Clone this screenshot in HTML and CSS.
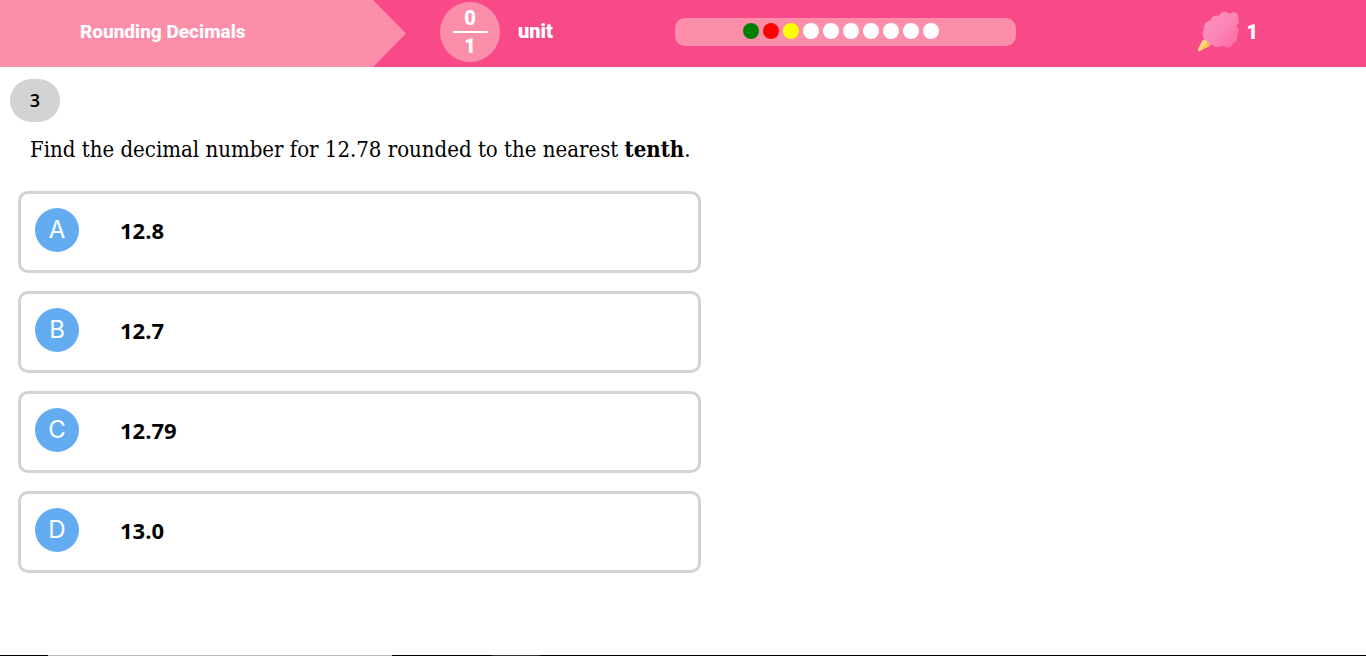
FILE: index.html
```html
<!DOCTYPE html>
<html lang="en">
<head>
<meta charset="utf-8">
<meta name="viewport" content="width=device-width, initial-scale=1">
<title>Rounding Decimals</title>
<link rel="stylesheet" href="styles.css">
</head>
<body>
<header class="topbar">
  <h1 class="topic">Rounding Decimals</h1>
  <div class="units">
    <div class="fraction"><span class="numerator">0</span><span class="denominator">1</span></div>
    <span class="unit-label">unit</span>
  </div>
  <ol class="progress" aria-label="Question progress">
    <li class="dot dot-right"></li><li class="dot dot-wrong"></li><li class="dot dot-current"></li><li class="dot"></li><li class="dot"></li><li class="dot"></li><li class="dot"></li><li class="dot"></li><li class="dot"></li><li class="dot"></li>
  </ol>
  <div class="reward">
    <svg class="candy" viewBox="0 0 42 42" aria-hidden="true">
      <defs><linearGradient id="floss" x1="0" y1="0" x2="1" y2="1"><stop offset="0" stop-color="#ff91c2"/><stop offset=".5" stop-color="#fa87b5"/><stop offset="1" stop-color="#ff64a4"/></linearGradient></defs>
      <path fill="url(#floss)" d="M11 34C7 33 5 30 6 27C3 24 5 20 6 18C5 12 10 10 13 9C14 4 19 4 21 5C22 1 28-1 31 3C36-1 42 3 40 8C42 11 40 14 38 15C42 18 41 23 39 24C40 29 38 32 35 32C33 38 27 38 25 34C22 37 17 37 15 34Z"/>
      <path fill="#ffc34f" d="M5 29Q10 29 12 35L2 40Q0 41 0 38Z"/>
      <path fill="#ffda83" d="M5 29Q8 29 9 31L2 40Q0 41 0 38Z"/>
    </svg>
    <span>1</span>
  </div>
</header>
<main class="quiz">
  <span class="question-number">3</span>
  <h2 class="question">Find the decimal number for 12.78 rounded to the nearest <strong>tenth</strong>.</h2>
  <div class="answers">
    <button class="answer" type="button"><span class="letter">A</span><span class="value">12.8</span></button>
    <button class="answer" type="button"><span class="letter">B</span><span class="value">12.7</span></button>
    <button class="answer" type="button"><span class="letter">C</span><span class="value">12.79</span></button>
    <button class="answer" type="button"><span class="letter">D</span><span class="value">13.0</span></button>
  </div>
</main>
<footer class="bottom-edge"></footer>
</body>
</html>
```

FILE: styles.css
```css
* { box-sizing: border-box; }

body {
  margin: 0;
  min-height: 100vh;
  display: flex;
  flex-direction: column;
  background: #fff;
  color: #000;
  font-family: "Open Sans", sans-serif;
}

.topbar {
  display: grid;
  grid-template-columns: 406fr 269fr 341fr 350fr;
  align-items: center;
  background: #f84a89;
  color: #fff;
  font-family: Roboto, sans-serif;
  font-size: 20px;
  font-weight: 900;
}

.topic {
  margin: 0;
  padding: 0 80px 4px;
  height: 67px;
  line-height: 63px;
  background: #fd8eaa;
  clip-path: polygon(0 0, calc(100% - 33px) 0, 100% 50%, calc(100% - 33px) 100%, 0 100%);
  font-size: 19px;
  font-weight: 800;
  white-space: nowrap;
}

.units {
  display: flex;
  align-items: center;
  gap: 18px;
  padding: 0 0 4px 34px;
}

.unit-label {
  padding-bottom: 2px;
}

.fraction {
  width: 60px;
  height: 60px;
  display: flex;
  flex-direction: column;
  align-items: center;
  justify-content: center;
  border-radius: 50%;
  background: #fd8eaa;
  line-height: 26px;
}

.numerator {
  width: 35px;
  border-bottom: 2px solid #fff;
  text-align: center;
}

.progress {
  list-style: none;
  display: flex;
  justify-content: center;
  gap: 4px;
  margin: 0 0 4px;
  padding: 5px 10px 7px 0;
  border-radius: 10px;
  background: #fd8eaa;
}

.dot {
  width: 16px;
  height: 16px;
  border-radius: 50%;
  background: #fff;
}

.dot-right { background: #008000; }
.dot-wrong { background: #f00; }
.dot-current { background: #ff0; }

.reward {
  display: flex;
  align-items: center;
  justify-content: flex-end;
  gap: 6px;
  padding: 0 108px 4px 0;
}

.candy {
  width: 42px;
  height: 42px;
}

.quiz {
  display: flex;
  flex-direction: column;
  align-items: flex-start;
  padding: 12px 10px 0;
}

.question-number {
  width: 50px;
  height: 43px;
  border-radius: 22px;
  background: #d3d3d3;
  font-size: 18px;
  font-weight: 600;
  line-height: 43px;
  text-align: center;
}

.question {
  margin: 12px 20px 26px;
  font-family: "DejaVu Serif Condensed", "DejaVu Serif", serif;
  font-size: 22px;
  font-stretch: condensed;
  font-weight: 400;
  line-height: 30px;
}

.answers {
  display: grid;
  gap: 18px;
  width: 50vw;
  margin-left: 8px;
}

.answer {
  display: flex;
  align-items: center;
  gap: 41px;
  padding: 14px 14px 18px;
  border: 3px solid #d3d3d3;
  border-radius: 10px;
  background: #fff;
  color: #000;
  font-family: "Open Sans", sans-serif;
  font-size: 22px;
  font-weight: 700;
}

.letter {
  width: 44px;
  height: 44px;
  border-radius: 50%;
  background: #64acf1;
  color: #fff;
  font-family: Inter, sans-serif;
  font-size: 24px;
  font-weight: 400;
  line-height: 44px;
  text-align: center;
}

.bottom-edge {
  height: 1px;
  margin-top: auto;
  background: linear-gradient(to right, #000 48px, #bbb 48px, #bbb 392px, #000 392px, #000 492px, #333 492px, #333 540px, #000 540px);
}
```
